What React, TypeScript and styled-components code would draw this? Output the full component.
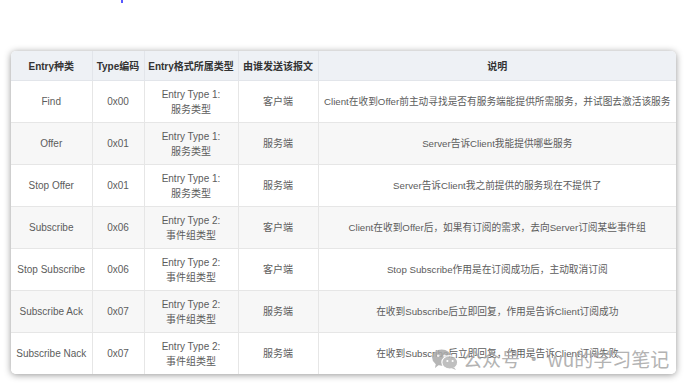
import React from 'react';
import styled, { createGlobalStyle } from 'styled-components';

const GlobalStyle = createGlobalStyle`
  html, body {
    margin: 0;
    padding: 0;
    background: #fff;
  }
  body {
    font-family: "Liberation Sans", "Noto Sans CJK SC", sans-serif;
  }
`;

type Row = {
    kind: string;
    code: string;
    format: [string, string];
    sender: string;
    desc: string;
};

const rows: Row[] = [
    { kind: 'Find', code: '0x00', format: ['Entry Type 1:', '服务类型'], sender: '客户端', desc: 'Client在收到Offer前主动寻找是否有服务端能提供所需服务，并试图去激活该服务' },
    { kind: 'Offer', code: '0x01', format: ['Entry Type 1:', '服务类型'], sender: '服务端', desc: 'Server告诉Client我能提供哪些服务' },
    { kind: 'Stop Offer', code: '0x01', format: ['Entry Type 1:', '服务类型'], sender: '服务端', desc: 'Server告诉Client我之前提供的服务现在不提供了' },
    { kind: 'Subscribe', code: '0x06', format: ['Entry Type 2:', '事件组类型'], sender: '客户端', desc: 'Client在收到Offer后，如果有订阅的需求，去向Server订阅某些事件组' },
    { kind: 'Stop Subscribe', code: '0x06', format: ['Entry Type 2:', '事件组类型'], sender: '客户端', desc: 'Stop Subscribe作用是在订阅成功后，主动取消订阅' },
    { kind: 'Subscribe Ack', code: '0x07', format: ['Entry Type 2:', '事件组类型'], sender: '服务端', desc: '在收到Subscribe后立即回复，作用是告诉Client订阅成功' },
    { kind: 'Subscribe Nack', code: '0x07', format: ['Entry Type 2:', '事件组类型'], sender: '服务端', desc: '在收到Subscribe后立即回复，作用是告诉Client订阅失败' },
];

const colWidths = [81, 52, 94, 80, 358];

export default function App() {
    return (
        <>
            <GlobalStyle />
            <Page>
                <LinkMark />
                <Card>
                    <Table>
                        <colgroup>
                            {colWidths.map((w, i) => (
                                <col key={i} style={{ width: w }} />
                            ))}
                        </colgroup>
                        <thead>
                            <tr>
                                <Th>Entry种类</Th>
                                <Th>Type编码</Th>
                                <Th>Entry格式所属类型</Th>
                                <Th>由谁发送该报文</Th>
                                <Th>说明</Th>
                            </tr>
                        </thead>
                        <tbody>
                            {rows.map((r, i) => (
                                <Tr key={i} $striped={i % 2 === 1}>
                                    <Td>{r.kind}</Td>
                                    <Td>{r.code}</Td>
                                    <Td>
                                        {r.format[0]}
                                        <br />
                                        {r.format[1]}
                                    </Td>
                                    <Td>{r.sender}</Td>
                                    <Td $last>{r.desc}</Td>
                                </Tr>
                            ))}
                        </tbody>
                    </Table>
                </Card>
                <Watermark>
                    <svg width="26" height="21" viewBox="0 0 27 22">
                        <ellipse cx="10" cy="9" rx="10" ry="8.5" fill="#a9a9a9" />
                        <path d="M4 15 L3 20 L8 16 Z" fill="#a9a9a9" />
                        <ellipse cx="18.5" cy="14" rx="8.3" ry="7" fill="#b4b4b4" stroke="#fff" strokeWidth="1.2" />
                        <path d="M23 19 L25 22 L20 20 Z" fill="#b4b4b4" />
                        <circle cx="6.5" cy="7" r="1.3" fill="#fff" />
                        <circle cx="13" cy="7" r="1.3" fill="#fff" />
                        <circle cx="16" cy="12.5" r="1.1" fill="#fff" />
                        <circle cx="21.5" cy="12.5" r="1.1" fill="#fff" />
                    </svg>
                    <WatermarkText>公众号 · wu的学习笔记</WatermarkText>
                </Watermark>
            </Page>
        </>
    );
}

const Page = styled.div`
  position: relative;
  width: 692px;
  height: 389px;
  padding: 51px 0 0 11px;
  box-sizing: border-box;
  overflow: hidden;
`;

const LinkMark = styled.div`
  position: absolute;
  left: 121px;
  top: 0;
  width: 2px;
  height: 3px;
  background: #5858ff;
`;

const Card = styled.div`
  width: 665px;
  border-radius: 5px;
  overflow: hidden;
  background: #fff;
  box-shadow: 0 1px 7px rgba(0, 0, 0, 0.42);
`;

const Table = styled.table`
  width: 100%;
  border-collapse: collapse;
  table-layout: fixed;
  font-size: 10px;
`;

const Th = styled.th`
  height: 29px;
  padding: 0;
  background: #eef1f5;
  color: #333;
  font-weight: bold;
  text-align: center;
  white-space: nowrap;
  border-right: 1px solid #e2e5ea;
  border-bottom: 1px solid #e2e5ea;
  &:last-child {
    border-right: none;
  }
`;

const Tr = styled.tr<{ $striped?: boolean }>`
  background: ${(p) => (p.$striped ? '#f7f7f7' : '#fff')};
`;

const Td = styled.td<{ $last?: boolean }>`
  height: 41px;
  padding: 0;
  color: #5c5c5c;
  text-align: center;
  line-height: 15px;
  white-space: nowrap;
  font-size: ${(p) => (p.$last ? '9.7px' : '10px')};
  border-right: ${(p) => (p.$last ? 'none' : '1px solid #e6e6e6')};
  border-bottom: 1px solid #e6e6e6;
  tr:last-child > & {
    border-bottom: none;
  }
`;

const Watermark = styled.div`
  position: absolute;
  left: 432px;
  top: 348px;
  display: flex;
  align-items: center;
  gap: 5px;
  white-space: nowrap;
  opacity: 0.85;
`;

const WatermarkText = styled.span`
  font-family: "Noto Sans CJK SC", sans-serif;
  font-size: 19px;
  line-height: 22px;
  color: #a6a6a6;
  white-space: nowrap;
`;
